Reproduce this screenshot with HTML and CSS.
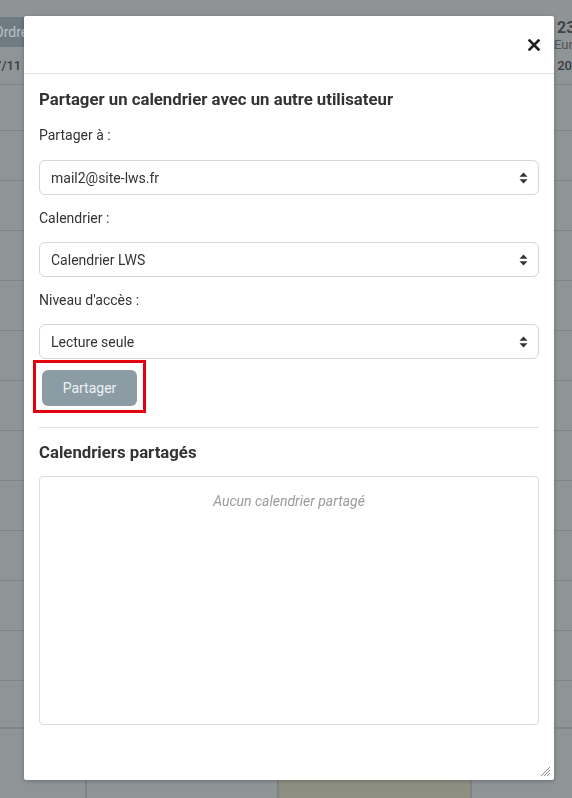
FILE: index.html
```html
<!DOCTYPE html>
<html lang="fr">
<head>
<meta charset="utf-8">
<title>Partager un calendrier</title>
<link rel="stylesheet" href="styles.css">
</head>
<body>
<div class="bg">
  <div class="bg-top"></div>
  <div class="bg-head">
    <div class="bg-tab">Ordre</div>
    <div class="bg-num"><span class="n">23</span><span class="e">Euro</span></div>
  </div>
  <div class="bg-dates"><span>7/11</span><span>du 20</span></div>
  <div class="bg-row first"></div>
  <div class="bg-row"></div>
  <div class="bg-row"></div>
  <div class="bg-row"></div>
  <div class="bg-row"></div>
  <div class="bg-row"></div>
  <div class="bg-row"></div>
  <div class="bg-row"></div>
  <div class="bg-row"></div>
  <div class="bg-row"></div>
  <div class="bg-row"></div>
  <div class="bg-row"></div>
  <div class="bg-row last"></div>
  <div class="bg-foot">
    <div class="fc c1"></div>
    <div class="fc c2"></div>
    <div class="fc c3"></div>
    <div class="fc c4"></div>
  </div>
</div>

<div class="modal">
  <div class="modal-header">
    <svg class="close" width="12" height="12" viewBox="0 0 12 12"><path d="M1.5 1.5 L10.5 10.5 M10.5 1.5 L1.5 10.5" stroke="#1f1f1f" stroke-width="2.6" stroke-linecap="square"/></svg>
  </div>
  <div class="modal-body">
    <h4 class="title">Partager un calendrier avec un autre utilisateur</h4>
    <div class="label">Partager à :</div>
    <div class="select"><span>mail2@site-lws.fr</span><svg class="arr" width="9" height="12" viewBox="0 0 9 12"><path d="M4.5 0.5 L8.5 4.8 L0.5 4.8 Z M4.5 11.5 L8.5 7.2 L0.5 7.2 Z" fill="#333"/></svg></div>
    <div class="label">Calendrier :</div>
    <div class="select"><span>Calendrier LWS</span><svg class="arr" width="9" height="12" viewBox="0 0 9 12"><path d="M4.5 0.5 L8.5 4.8 L0.5 4.8 Z M4.5 11.5 L8.5 7.2 L0.5 7.2 Z" fill="#333"/></svg></div>
    <div class="label">Niveau d'accès :</div>
    <div class="select"><span>Lecture seule</span><svg class="arr" width="9" height="12" viewBox="0 0 9 12"><path d="M4.5 0.5 L8.5 4.8 L0.5 4.8 Z M4.5 11.5 L8.5 7.2 L0.5 7.2 Z" fill="#333"/></svg></div>
    <div class="btn-wrap">
      <button class="btn">Partager</button>
      <div class="highlight"></div>
    </div>
    <hr class="sep">
    <h4 class="title">Calendriers partagés</h4>
    <div class="list"><em>Aucun calendrier partagé</em></div>
  </div>
  <svg class="resize" width="11" height="11" viewBox="0 0 11 11"><path d="M10 1 L1 10 M10 4 L4 10 M10 7 L7 10" stroke="#888" stroke-width="1"/></svg>
</div>
</body>
</html>
```

FILE: styles.css
```css
html, body {
  margin: 0;
  padding: 0;
}
body {
  width: 572px;
  height: 798px;
  overflow: hidden;
  background: #8f9497;
  font-family: Roboto, "Noto Sans", "Liberation Sans", sans-serif;
  color: #333;
}

/* background page (behind overlay) */
.bg {
  display: flex;
  flex-direction: column;
  width: 572px;
  height: 798px;
}
.bg-top {
  height: 17px;
  background: #8f9396;
}
.bg-head {
  height: 30px;
  display: flex;
  justify-content: space-between;
  align-items: flex-start;
}
.bg-tab {
  width: 30px;
  height: 30px;
  margin-left: -6px;
  background: #6f7b82;
  color: #b9c2c7;
  font-size: 14px;
  line-height: 30px;
  overflow: hidden;
  white-space: nowrap;
}
.bg-num {
  width: 18px;
  display: flex;
  flex-direction: column;
  overflow: hidden;
  white-space: nowrap;
  margin-top: 2px;
}
.bg-num .n {
  font-size: 16px;
  font-weight: 700;
  color: #3e4346;
  line-height: 18px;
  padding-left: 3px;
}
.bg-num .e {
  font-size: 13px;
  color: #50565a;
  line-height: 15px;
}
.bg-dates {
  height: 37px;
  border-bottom: 1px solid #7f8487;
  display: flex;
  justify-content: space-between;
  align-items: flex-end;
  font-size: 13px;
  color: #393e41;
  font-weight: 500;
}
.bg-dates span {
  line-height: 24px;
  margin-bottom: 6px;
  white-space: nowrap;
}
.bg-dates span:first-child {
  margin-left: -6px;
}
.bg-dates span:last-child {
  width: 18px;
  overflow: hidden;
  direction: rtl;
  text-align: left;
}
.bg-row {
  height: 49px;
  border-bottom: 1px solid #7f8487;
  flex: none;
}
.bg-row.first {
  height: 45px;
}
.bg-row.last {
  height: 46px;
}
.bg-foot {
  flex: 1;
  display: flex;
  border-top: 1px solid #7f8487;
}
.fc {
  border-right: 2px solid #7e8386;
}
.c1 { width: 85px; }
.c2 { width: 190px; }
.c3 { width: 191px; background: #8e8f83; }
.c4 { flex: 1; border-right: 0; }

/* modal overlay */
.modal {
  position: fixed;
  left: 24px;
  top: 16px;
  width: 530px;
  height: 764px;
  background: #fff;
  border-radius: 2px;
  box-shadow: 0 1px 4px rgba(0, 0, 0, 0.25);
  display: flex;
  flex-direction: column;
}
.modal-header {
  height: 58px;
  flex: none;
  border-bottom: 1px solid #e2e2e2;
  display: flex;
  justify-content: flex-end;
  align-items: center;
  padding-right: 14px;
  box-sizing: border-box;
}
.close {
  display: block;
}
.modal-body {
  padding: 15px 15px 0;
  display: flex;
  flex-direction: column;
}
.title {
  margin: 0;
  font-size: 16.75px;
  font-weight: 700;
  line-height: 20px;
  color: #333;
}
.label {
  margin-top: 16px;
  font-size: 14px;
  line-height: 20px;
  color: #333;
}
.select + .label {
  margin-top: 13px;
}
.select {
  margin-top: 15px;
  height: 35px;
  box-sizing: border-box;
  border: 1px solid #d6d6d6;
  border-radius: 6px;
  display: flex;
  align-items: center;
  justify-content: space-between;
  padding: 0 10px 0 11px;
  font-size: 14px;
  color: #333;
}
.select + .label + .select {
  margin-top: 14px;
}
.arr {
  display: block;
}
.btn-wrap {
  position: relative;
  margin-top: 11px;
  margin-left: 3px;
  align-self: flex-start;
}
.btn {
  display: block;
  width: 95px;
  height: 36px;
  border: 0;
  border-radius: 6px;
  background: #8b9ca5;
  color: #eef2f4;
  font-family: inherit;
  font-size: 14px;
  padding: 0;
}
.highlight {
  position: absolute;
  left: -9px;
  top: -10px;
  width: 113px;
  height: 53px;
  box-sizing: border-box;
  border: 3px solid #e5000d;
}
.sep {
  margin: 21px 0 0;
  border: 0;
  border-top: 1px solid #e0e0e0;
  height: 0;
}
.sep + .title {
  margin-top: 14px;
}
.list {
  margin-top: 14px;
  height: 249px;
  box-sizing: border-box;
  border: 1px solid #dcdcdc;
  border-radius: 4px;
  text-align: center;
  padding-top: 14px;
  font-size: 14px;
  line-height: 20px;
  color: #9a9a9a;
}
.resize {
  position: absolute;
  right: 3px;
  bottom: 3px;
}
```
